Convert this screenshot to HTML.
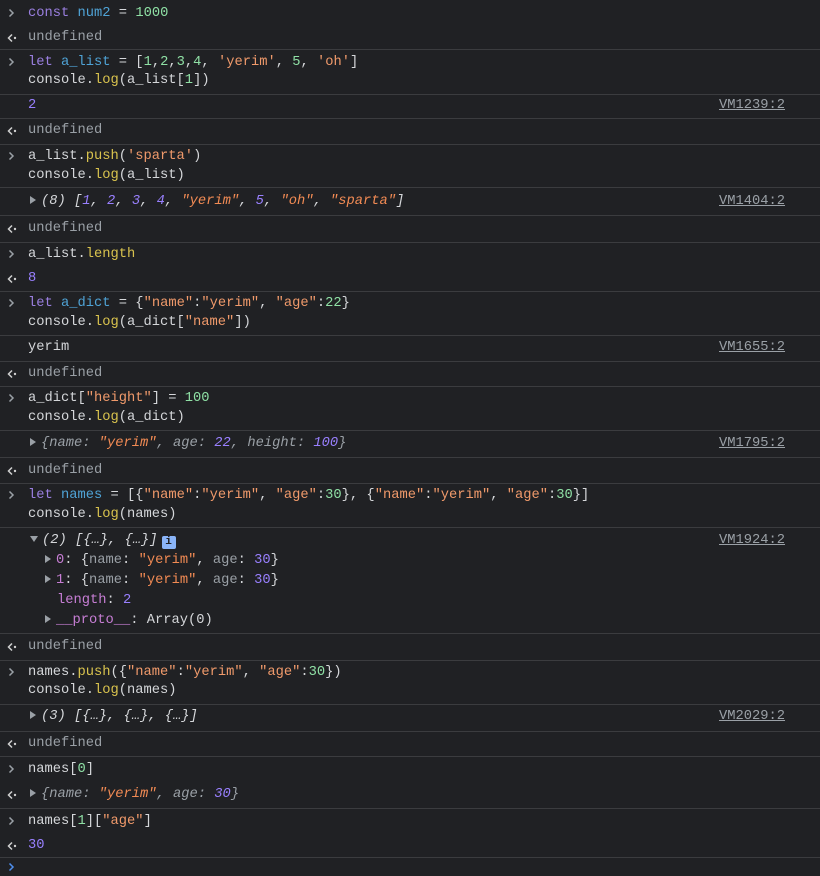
<!DOCTYPE html>
<html><head><meta charset="utf-8"><style>
body{margin:0;width:820px;height:868px;background:#202124;overflow:hidden;font-family:"Liberation Mono",monospace;font-size:13.75px;color:#d5d7da;position:relative}
.l{position:absolute;left:28px;height:18px;line-height:18px;white-space:pre}
.s{position:absolute;left:0;width:820px;height:1px;background:#3b3c3f}
.p{position:absolute;left:6px;width:14px;height:18px}
.vm{position:absolute;left:719px;height:18px;line-height:18px;color:#9aa0a6;text-decoration:underline;white-space:pre}
.k{color:#9a7fe0}.d{color:#4fa3d6}.n{color:#8fe0a5}.st{color:#f09a6b}.f{color:#d9c34e}
.g{color:#9aa0a6}.on{color:#9980ff}.os{color:#f28b54}.pp{color:#c77ed5}
.i{font-style:italic}
.tri{display:inline-block;width:0;height:0;border-left:6px solid #9aa0a6;border-top:4.5px solid transparent;border-bottom:4.5px solid transparent;margin-right:5px;vertical-align:0}
.trd{display:inline-block;width:0;height:0;border-top:6px solid #9aa0a6;border-left:4.5px solid transparent;border-right:4.5px solid transparent;margin-right:4px;vertical-align:1px}
.info{display:inline-block;width:14px;height:13px;background:#8ab4f8;border-radius:2px;color:#202124;font-size:11px;line-height:13px;text-align:center;font-weight:bold;vertical-align:-1px;margin-left:4px}
</style></head><body>
<svg width="0" height="0" style="position:absolute"><defs>
<symbol id="in" viewBox="0 0 14 18"><path d="M3.5 5.5 L7 9 L3.5 12.5" fill="none" stroke="#9aa0a6" stroke-width="1.5"/></symbol>
<symbol id="out" viewBox="0 0 14 18"><path d="M6 5.5 L2.5 9 L6 12.5" fill="none" stroke="#d0d0d0" stroke-width="1.5"/><circle cx="9" cy="9" r="1.2" fill="#d0d0d0"/></symbol>
<symbol id="inb" viewBox="0 0 14 18"><path d="M3.5 5.5 L7 9 L3.5 12.5" fill="none" stroke="#4e8fef" stroke-width="1.5"/></symbol>
</defs></svg>
<svg class="p" style="top:4px"><use href="#in"/></svg><div class="l" style="top:5px"><span class="k">const</span> <span class="d">num2</span> = <span class="n">1000</span></div>
<svg class="p" style="top:29px"><use href="#out"/></svg><div class="l g" style="top:29px">undefined</div>
<div class="s" style="top:49px"></div>
<svg class="p" style="top:53px"><use href="#in"/></svg><div class="l" style="top:54px"><span class="k">let</span> <span class="d">a_list</span> = [<span class="n">1</span>,<span class="n">2</span>,<span class="n">3</span>,<span class="n">4</span>, <span class="st">'yerim'</span>, <span class="n">5</span>, <span class="st">'oh'</span>]</div>
<div class="l" style="top:72px">console.<span class="f">log</span>(a_list[<span class="n">1</span>])</div>
<div class="s" style="top:94px"></div>
<div class="l on" style="top:97px">2</div><div class="vm" style="top:97px">VM1239:2</div>
<div class="s" style="top:118px"></div>
<svg class="p" style="top:122px"><use href="#out"/></svg><div class="l g" style="top:122px">undefined</div>
<div class="s" style="top:144px"></div>
<svg class="p" style="top:147px"><use href="#in"/></svg><div class="l" style="top:148px">a_list.<span class="f">push</span>(<span class="st">'sparta'</span>)</div>
<div class="l" style="top:167px">console.<span class="f">log</span>(a_list)</div>
<div class="s" style="top:187px"></div>
<div class="l i" style="top:193px;left:30px"><span class="tri"></span>(8) [<span class="on">1</span>, <span class="on">2</span>, <span class="on">3</span>, <span class="on">4</span>, <span class="os">"yerim"</span>, <span class="on">5</span>, <span class="os">"oh"</span>, <span class="os">"sparta"</span>]</div><div class="vm" style="top:193px">VM1404:2</div>
<div class="s" style="top:215px"></div>
<svg class="p" style="top:220px"><use href="#out"/></svg><div class="l g" style="top:220px">undefined</div>
<div class="s" style="top:242px"></div>
<svg class="p" style="top:245px"><use href="#in"/></svg><div class="l" style="top:246px">a_list.<span class="f">length</span></div>
<svg class="p" style="top:270px"><use href="#out"/></svg><div class="l on" style="top:270px">8</div>
<div class="s" style="top:291px"></div>
<svg class="p" style="top:294px"><use href="#in"/></svg><div class="l" style="top:295px"><span class="k">let</span> <span class="d">a_dict</span> = {<span class="st">"name"</span>:<span class="st">"yerim"</span>, <span class="st">"age"</span>:<span class="n">22</span>}</div>
<div class="l" style="top:314px">console.<span class="f">log</span>(a_dict[<span class="st">"name"</span>])</div>
<div class="s" style="top:335px"></div>
<div class="l" style="top:339px">yerim</div><div class="vm" style="top:339px">VM1655:2</div>
<div class="s" style="top:361px"></div>
<svg class="p" style="top:365px"><use href="#out"/></svg><div class="l g" style="top:365px">undefined</div>
<div class="s" style="top:386px"></div>
<svg class="p" style="top:389px"><use href="#in"/></svg><div class="l" style="top:390px">a_dict[<span class="st">"height"</span>] = <span class="n">100</span></div>
<div class="l" style="top:409px">console.<span class="f">log</span>(a_dict)</div>
<div class="s" style="top:430px"></div>
<div class="l i g" style="top:435px;left:30px"><span class="tri"></span>{name: <span class="os">"yerim"</span>, age: <span class="on">22</span>, height: <span class="on">100</span>}</div><div class="vm" style="top:435px">VM1795:2</div>
<div class="s" style="top:457px"></div>
<svg class="p" style="top:462px"><use href="#out"/></svg><div class="l g" style="top:462px">undefined</div>
<div class="s" style="top:483px"></div>
<svg class="p" style="top:486px"><use href="#in"/></svg><div class="l" style="top:487px"><span class="k">let</span> <span class="d">names</span> = [{<span class="st">"name"</span>:<span class="st">"yerim"</span>, <span class="st">"age"</span>:<span class="n">30</span>}, {<span class="st">"name"</span>:<span class="st">"yerim"</span>, <span class="st">"age"</span>:<span class="n">30</span>}]</div>
<div class="l" style="top:506px">console.<span class="f">log</span>(names)</div>
<div class="s" style="top:527px"></div>
<div class="l i" style="top:532px;left:30px"><span class="trd"></span>(2) [{…}, {…}]<span class="info" style="font-style:normal">i</span></div><div class="vm" style="top:532px">VM1924:2</div>
<div class="l" style="top:552px;left:45px"><span class="tri"></span><span class="pp">0</span>: {<span class="g">name</span>: <span class="os">"yerim"</span>, <span class="g">age</span>: <span class="on">30</span>}</div>
<div class="l" style="top:572px;left:45px"><span class="tri"></span><span class="pp">1</span>: {<span class="g">name</span>: <span class="os">"yerim"</span>, <span class="g">age</span>: <span class="on">30</span>}</div>
<div class="l" style="top:592px;left:57px"><span class="pp">length</span>: <span class="on">2</span></div>
<div class="l" style="top:612px;left:45px"><span class="tri"></span><span class="pp">__proto__</span>: Array(0)</div>
<div class="s" style="top:633px"></div>
<svg class="p" style="top:638px"><use href="#out"/></svg><div class="l g" style="top:638px">undefined</div>
<div class="s" style="top:660px"></div>
<svg class="p" style="top:663px"><use href="#in"/></svg><div class="l" style="top:664px">names.<span class="f">push</span>({<span class="st">"name"</span>:<span class="st">"yerim"</span>, <span class="st">"age"</span>:<span class="n">30</span>})</div>
<div class="l" style="top:682px">console.<span class="f">log</span>(names)</div>
<div class="s" style="top:704px"></div>
<div class="l i" style="top:708px;left:30px"><span class="tri"></span>(3) [{…}, {…}, {…}]</div><div class="vm" style="top:708px">VM2029:2</div>
<div class="s" style="top:731px"></div>
<svg class="p" style="top:735px"><use href="#out"/></svg><div class="l g" style="top:735px">undefined</div>
<div class="s" style="top:756px"></div>
<svg class="p" style="top:760px"><use href="#in"/></svg><div class="l" style="top:761px">names[<span class="n">0</span>]</div>
<svg class="p" style="top:786px"><use href="#out"/></svg><div class="l i g" style="top:786px;left:30px"><span class="tri"></span>{name: <span class="os">"yerim"</span>, age: <span class="on">30</span>}</div>
<div class="s" style="top:808px"></div>
<svg class="p" style="top:812px"><use href="#in"/></svg><div class="l" style="top:813px">names[<span class="n">1</span>][<span class="st">"age"</span>]</div>
<svg class="p" style="top:837px"><use href="#out"/></svg><div class="l on" style="top:837px">30</div>
<div class="s" style="top:857px"></div>
<svg class="p" style="top:858px"><use href="#inb"/></svg>
</body></html>
